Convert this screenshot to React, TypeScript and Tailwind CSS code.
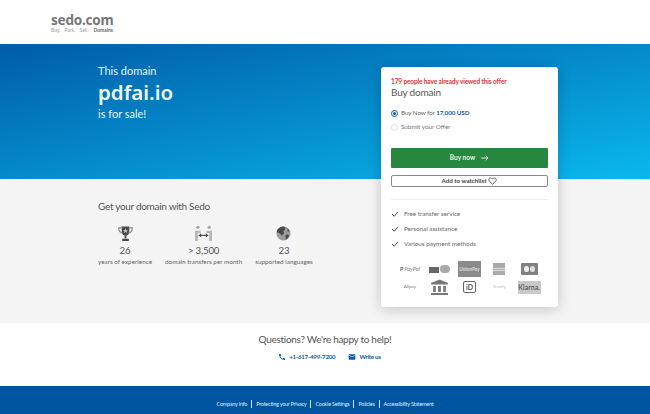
import React from 'react'
import { MdPhone, MdEmail } from 'react-icons/md'

function Trophy() {
  return (
    <svg viewBox="0 0 18 18" className="h-[17px] w-[17px]">
      <path d="M5 1.500h8v6c0 2.500-2 4-4 4s-4-1.500-4-4z" fill="#4a4a4a" />
      <path d="M5 3H1.800c0 3 1 5 4 5.500M13 3h3.200c0 3-1 5-4 5.500" fill="none" stroke="#8a8a8a" strokeWidth="1.200" />
      <path d="M8 11h2v3H8zM5.500 14.500h7V17h-7z" fill="#4a4a4a" />
      <path d="M9 3.500l.8 1.700 1.800.2-1.300 1.200.4 1.800L9 7.500l-1.700.9.400-1.800-1.300-1.200 1.800-.2z" fill="#bdbdbd" />
    </svg>
  )
}

function Transfer() {
  return (
    <svg viewBox="0 0 20 18" className="h-[17px] w-[19px]">
      <circle cx="4" cy="2.500" r="1.800" fill="#a8a8a8" />
      <circle cx="16" cy="2.500" r="1.800" fill="#a8a8a8" />
      <path d="M1 6h6v2.500H4v8.500H1zM19 6h-6v2.500h3v8.500h3z" fill="#b8b8b8" />
      <path d="M5 11h10" stroke="#444" strokeWidth="1.200" />
      <path d="M7.500 8.800L5 11l2.500 2.200zM12.500 8.800L15 11l-2.500 2.200z" fill="#444" />
    </svg>
  )
}

function Globe() {
  return (
    <svg viewBox="0 0 16 16" className="h-[15px] w-[15px]">
      <circle cx="8" cy="8" r="7.500" fill="#9c9c9c" />
      <path d="M2 3.500C4 1 7 .2 9 .8L10 3 8 5.500 8.500 8 6 10.500 4.500 8 1.500 7 .8 6C1 5 1.500 4.200 2 3.500zM11 9l3 .5-1.500 3.500-2 1-.5-3zM12 2.500l2.500 3-2 .5z" fill="#484848" />
    </svg>
  )
}

function Check() {
  return (
    <svg viewBox="0 0 10 8" className="h-[6px] w-[8px] shrink-0">
      <path d="M1 4l3 3 5-6" fill="none" stroke="#4a4a4a" strokeWidth="1.300" />
    </svg>
  )
}

function Heart() {
  return (
    <svg viewBox="0 0 12 11" className="h-[8px] w-[9px]">
      <path d="M6 10L1.500 5.500C-.5 3 2.500-.5 6 2.500 9.500-.5 12.500 3 10.500 5.500z" fill="none" stroke="#444" strokeWidth="1.200" />
    </svg>
  )
}

function Stat({ icon, value, label }: { icon: React.ReactNode; value: string; label: string }) {
  return (
    <div className="flex flex-col items-center">
      <div className="flex h-[19px] items-center">{icon}</div>
      <div className="text-[9.700px] leading-[14px] tracking-[-0.2px] text-[#555]">{value}</div>
      <div className="whitespace-nowrap text-[6.350px] leading-[9px] text-[#666]">{label}</div>
    </div>
  )
}

function PaymentLogos() {
  return (
    <div className="mt-[12px] grid grid-cols-5 items-center justify-items-center gap-y-[1px] px-[4px]">
      <div className="flex h-[16px] items-center gap-[1px] text-[5.500px] font-bold italic text-[#9a9a9a]">
        <span className="text-[#555]">P</span>PayPal
      </div>
      <div className="flex items-end gap-[1px]">
        <div className="h-[6px] w-[10px] bg-[#666]" />
        <div className="h-[8px] w-[10px] rounded-full bg-[#aaa]" />
      </div>
      <div className="flex h-[16px] w-[23px] items-center justify-center bg-[#8a8a8a] text-[5px] font-bold italic leading-[5px] text-[#ddd]">
        UnionPay
      </div>
      <div className="flex h-[12px] w-[12px] flex-col justify-center gap-[1px] bg-[#aaa]">
        <div className="h-[1px] bg-[#ddd]" />
        <div className="h-[1px] bg-[#ddd]" />
      </div>
      <div className="flex h-[12px] w-[17px] items-center justify-center gap-[1px] rounded-[1px] bg-[#808080]">
        <div className="h-[6px] w-[5px] rounded-full bg-[#eee]" />
        <div className="h-[6px] w-[5px] rounded-full bg-[#ddd]" />
      </div>
      <div className="flex h-[18px] items-center text-[4.500px] text-[#777]">Alipay</div>
      <svg viewBox="0 0 16 16" className="h-[16px] w-[17px]" preserveAspectRatio="none">
        <path d="M8 .5L16 4v1.500H0V4zM0 14h16v2H0zM2 7h2.500v6H2zM6.700 7h2.600v6H6.700zM11.500 7H14v6h-2.500z" fill="#777" />
      </svg>
      <div className="flex h-[12px] w-[13px] items-center justify-center rounded-[2px] border border-[#666] text-[7px] font-bold leading-none text-[#555]">
        iD
      </div>
      <div className="text-[4.500px] text-[#bbb]">Trustly</div>
      <div className="flex h-[13px] w-[23px] items-center justify-center bg-[#c9c9c9] text-[7px] font-semibold text-[#555]">
        Klarna.
      </div>
    </div>
  )
}

function BuyCard() {
  return (
    <div className="absolute left-[381px] top-[67px] h-[240px] w-[177px] rounded-[3px] bg-white px-[10px] pt-[10px] shadow-[0_2px_14px_rgba(0,0,0,0.2)]">
      <div className="whitespace-nowrap text-[6.500px] font-bold leading-[9px] tracking-[-0.12px] text-[#e5323a]">
        179 people have already viewed this offer
      </div>
      <div className="text-[10px] leading-[13px] tracking-[-0.2px] text-[#555]">Buy domain</div>
      <div className="mt-[7px] flex h-[14px] items-center gap-[3px]">
        <div className="flex h-[7px] w-[7px] items-center justify-center rounded-full border border-[#0a5ca8]">
          <div className="h-[3px] w-[3px] rounded-full bg-[#0a5ca8]" />
        </div>
        <span className="text-[6.300px] tracking-[-0.1px] text-[#666]">
          Buy Now for <b className="font-bold text-[#0a5ca8]">17,000 USD</b>
        </span>
      </div>
      <div className="flex h-[14px] items-center gap-[3px]">
        <div className="h-[7px] w-[7px] rounded-full border border-[#ddd]" />
        <span className="text-[6.300px] text-[#777]">Submit your Offer</span>
      </div>
      <div className="mt-[14px] flex h-[20px] items-center justify-center gap-[6px] rounded-[1px] bg-[#27873f] text-[6.500px] font-bold text-[#e8f3ea]">
        Buy now
        <svg viewBox="0 0 10 8" className="h-[6px] w-[8px]">
          <path d="M0 4h8M6 1l3 3-3 3" fill="none" stroke="#fff" strokeWidth="1.100" />
        </svg>
      </div>
      <div className="mt-[7px] flex h-[12px] items-center justify-center gap-[2px] rounded-[2px] border border-[#888] text-[6.200px] font-bold text-[#444]">
        Add to watchlist <Heart />
      </div>
      <div className="mt-[12px] h-px bg-[#eee]" />
      <div className="mt-[9px] flex flex-col gap-[5px]">
        {['Free transfer service', 'Personal assistance', 'Various payment methods'].map(item => (
          <div key={item} className="flex h-[10px] items-center gap-[5px] text-[6.300px] text-[#666]">
            <Check />
            {item}
          </div>
        ))}
      </div>
      <PaymentLogos />
    </div>
  )
}

export default function App() {
  const links = ['Company Info', 'Protecting your Privacy', 'Cookie Settings', 'Policies', 'Accessibility Statement']

  return (
    <div className="relative h-[414px] w-[650px] overflow-hidden bg-white font-['Lato',sans-serif]">
      <header className="flex h-[44px] flex-col px-[51px] pt-[13px]">
        <div className="font-['Noto_Sans',sans-serif] text-[13.500px] font-bold leading-[14px] tracking-[-0.2px] text-[#777]">sedo.com</div>
        <div className="flex gap-[4px] text-[5px] leading-[6px] text-[#999]">
          <span>Buy.</span>
          <span>Park.</span>
          <span>Sell.</span>
          <span className="ml-[1px] font-bold text-[#666]">Domains</span>
        </div>
      </header>

      <section className="h-[135px] bg-[linear-gradient(to_bottom_right,#005ca8,#0ab8ee)] pl-[98px] pt-[19px] text-[#e4f3fb]">
        <div className="text-[11px] leading-[15px]">This domain</div>
        <div className="font-['Noto_Sans',sans-serif] text-[20.500px] font-semibold leading-[28px] text-[#eef8fd]">pdfai.io</div>
        <div className="text-[11px] leading-[15px]">is for sale!</div>
      </section>

      <section className="h-[144px] bg-[#f4f4f4] pl-[98px] pt-[20px]">
        <h2 className="text-[10px] leading-[14px] tracking-[-0.3px] text-[#555]">Get your domain with Sedo</h2>
        <div className="mt-[11px] flex gap-[13px]">
          <Stat icon={<Trophy />} value="26" label="years of experience" />
          <Stat icon={<Transfer />} value="> 3,500" label="domain transfers per month" />
          <Stat icon={<Globe />} value="23" label="supported languages" />
        </div>
      </section>

      <section className="flex h-[63px] flex-col items-center pt-[9px]">
        <div className="text-[10px] leading-[14px] tracking-[-0.3px] text-[#555]">Questions? We're happy to help!</div>
        <div className="mt-[6px] flex items-center pl-[9px] text-[6.200px] font-bold tracking-[-0.25px] text-[#0a5ca8]">
          <MdPhone className="mr-[3px] h-[8px] w-[8px]" />
          +1-617-499-7200
          <MdEmail className="ml-[13px] mr-[3px] h-[8px] w-[8px]" />
          Write us
        </div>
      </section>

      <footer className="flex h-[28px] items-center justify-center bg-[#0055a0] pt-[7px] text-[5.500px] tracking-[-0.25px] text-[#dcebf6]">
        {links.map((link, i) => (
          <span key={link} className={i > 0 ? 'ml-[4px] border-l border-[#cfe3f2] pl-[4px] leading-[8px]' : 'leading-[8px]'}>
            {link}
          </span>
        ))}
      </footer>

      <BuyCard />
    </div>
  )
}
